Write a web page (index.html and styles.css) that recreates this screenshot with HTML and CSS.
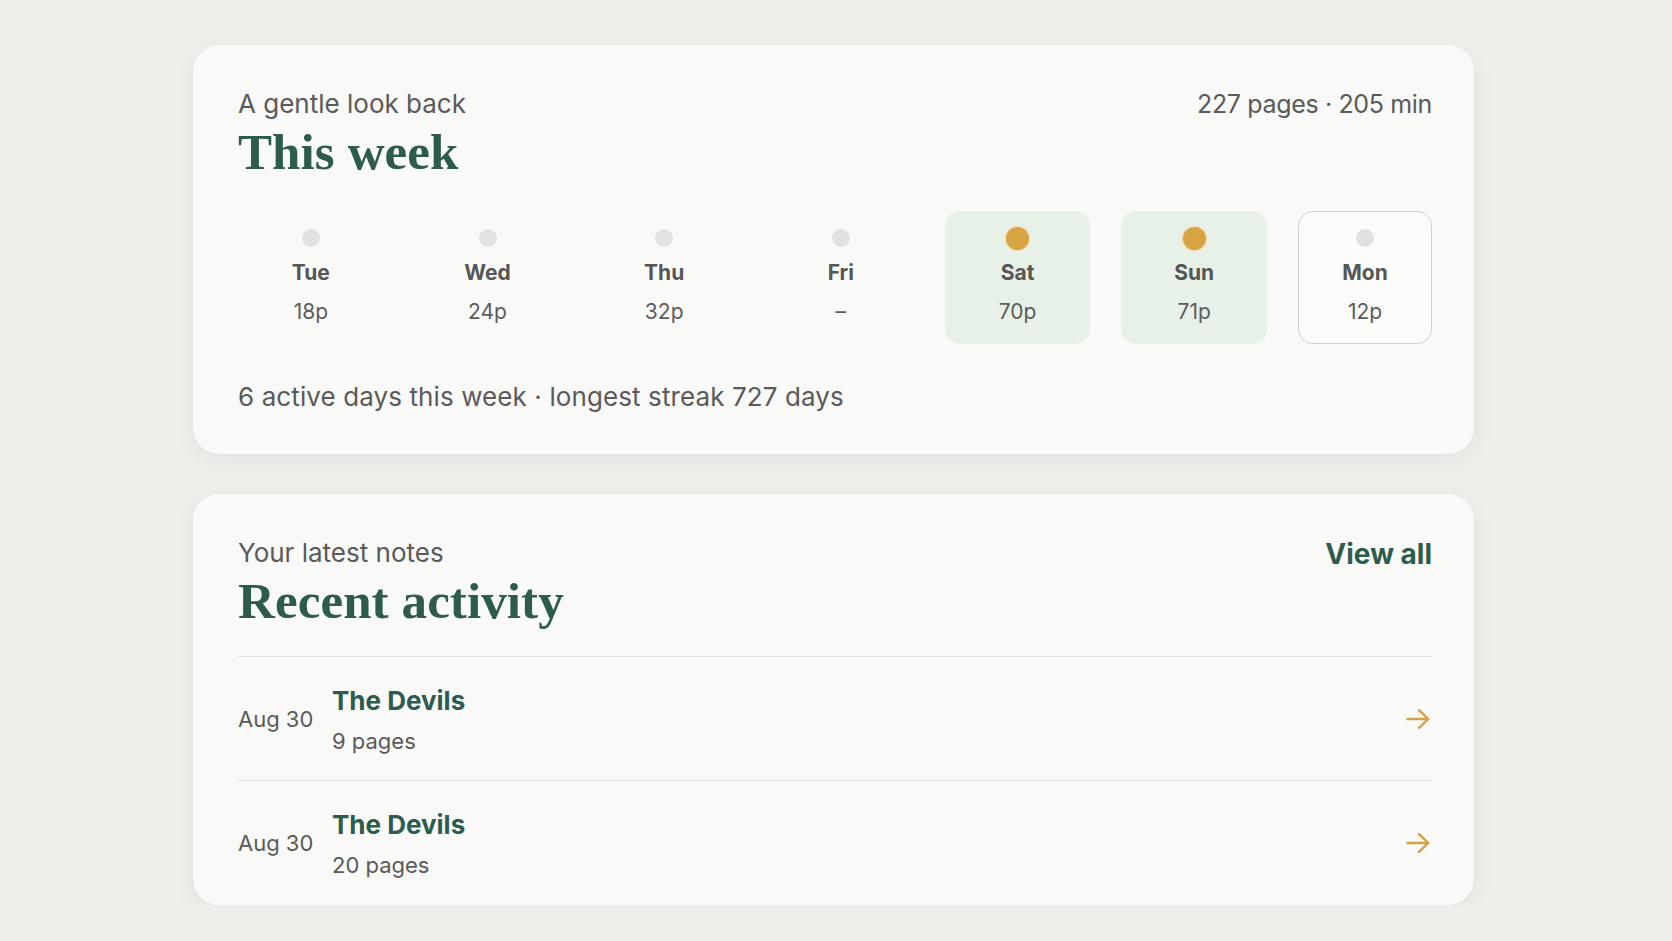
FILE: index.html
```html
<!DOCTYPE html>
<html lang="en">
<head>
<meta charset="utf-8">
<title>Reading overview</title>
<link rel="stylesheet" href="styles.css">
</head>
<body>
<main class="page">
  <section class="card week">
    <header class="card-head">
      <div class="head-text">
        <p class="eyebrow">A gentle look back</p>
        <h2 class="title">This week</h2>
      </div>
      <p class="stat">227 pages · 205 min</p>
    </header>
    <div class="days">
      <div class="day"><span class="dot-wrap"><span class="dot"></span></span><span class="day-name">Tue</span><span class="day-val">18p</span></div>
      <div class="day"><span class="dot-wrap"><span class="dot"></span></span><span class="day-name">Wed</span><span class="day-val">24p</span></div>
      <div class="day"><span class="dot-wrap"><span class="dot"></span></span><span class="day-name">Thu</span><span class="day-val">32p</span></div>
      <div class="day"><span class="dot-wrap"><span class="dot"></span></span><span class="day-name">Fri</span><span class="day-val">–</span></div>
      <div class="day day-hot"><span class="dot-wrap"><span class="dot dot-gold"></span></span><span class="day-name">Sat</span><span class="day-val">70p</span></div>
      <div class="day day-hot"><span class="dot-wrap"><span class="dot dot-gold"></span></span><span class="day-name">Sun</span><span class="day-val">71p</span></div>
      <div class="day day-today"><span class="dot-wrap"><span class="dot"></span></span><span class="day-name">Mon</span><span class="day-val">12p</span></div>
    </div>
    <p class="summary">6 active days this week · longest streak 727 days</p>
  </section>

  <section class="card recent">
    <header class="card-head">
      <div class="head-text">
        <p class="eyebrow">Your latest notes</p>
        <h2 class="title">Recent activity</h2>
      </div>
      <a class="view-all" href="#">View all</a>
    </header>
    <ul class="notes">
      <li class="note">
        <span class="note-date">Aug 30</span>
        <div class="note-body">
          <span class="note-title">The Devils</span>
          <span class="note-meta">9 pages</span>
        </div>
        <svg class="note-arrow" viewBox="0 0 24 20" width="24" height="20" aria-hidden="true"><path d="M1.5 10H22.3M13 1.2L22.3 10L13 18.8" fill="none" stroke="currentColor" stroke-width="2.4" stroke-linecap="round" stroke-linejoin="round"/></svg>
      </li>
      <li class="note">
        <span class="note-date">Aug 30</span>
        <div class="note-body">
          <span class="note-title">The Devils</span>
          <span class="note-meta">20 pages</span>
        </div>
        <svg class="note-arrow" viewBox="0 0 24 20" width="24" height="20" aria-hidden="true"><path d="M1.5 10H22.3M13 1.2L22.3 10L13 18.8" fill="none" stroke="currentColor" stroke-width="2.4" stroke-linecap="round" stroke-linejoin="round"/></svg>
      </li>
    </ul>
  </section>
</main>
</body>
</html>
```

FILE: styles.css
```css
* { box-sizing: border-box; }

html, body {
  margin: 0;
  padding: 0;
}

body {
  background: #efeeea;
  font-family: "Inter", "Noto Sans", "Liberation Sans", sans-serif;
  color: #5a5a59;
}

.page {
  width: 1281px;
  margin: 45px 0 0 193px;
  display: flex;
  flex-direction: column;
  gap: 40px;
}

.card {
  background: #f9f9f8;
  border-radius: 26px;
  box-shadow: 0 6px 26px rgba(40, 40, 30, 0.05), 0 1px 3px rgba(40, 40, 30, 0.03);
  padding: 43px 42px 41px 45px;
}

.card-head {
  display: flex;
  justify-content: space-between;
  align-items: flex-start;
}

.eyebrow {
  margin: 0;
  font-size: 26px;
  line-height: 32px;
  color: #5a5a59;
}

.title {
  margin: 4px 0 0;
  font-family: "Liberation Serif", "Times New Roman", serif;
  font-weight: 700;
  font-size: 51px;
  line-height: 56px;
  color: #2d5c4c;
  letter-spacing: 0.1px;
}

.stat {
  margin: 0;
  font-size: 25px;
  line-height: 32px;
  color: #5a5a59;
  letter-spacing: -0.35px;
}

.days {
  display: flex;
  gap: 31px;
  margin-top: 31px;
}

.day {
  flex: 1 1 0;
  display: flex;
  flex-direction: column;
  align-items: center;
  padding: 14px 0 17px;
  border-radius: 15px;
  border: 1.5px solid transparent;
}

.day-hot {
  background: #e7f1e8;
}

.day-today {
  flex: 0 0 134px;
  border-color: #cfd0cc;
  background: #fbfbfa;
}

.dot-wrap {
  height: 24px;
  display: flex;
  align-items: center;
  justify-content: center;
}

.dot {
  width: 18px;
  height: 18px;
  border-radius: 50%;
  background: #e1e2df;
}

.dot-gold {
  width: 23px;
  height: 23px;
  background: #d8a443;
  box-shadow: 0 0 0 1.5px #f4e3bb;
}

.day-name {
  margin-top: 9px;
  font-size: 21px;
  line-height: 28px;
  font-weight: 700;
  color: #565655;
}

.day-val {
  margin-top: 11px;
  font-size: 21px;
  line-height: 28px;
  color: #5c5c5b;
}

.summary {
  margin: 37px 0 0;
  font-size: 26px;
  line-height: 32px;
  color: #5a5a59;
  letter-spacing: 0.1px;
}

.recent {
  padding-bottom: 1px;
}

.view-all {
  font-size: 28px;
  line-height: 32px;
  font-weight: 700;
  color: #2d5c4c;
  text-decoration: none;
  margin-top: 1px;
}

.notes {
  list-style: none;
  margin: 27px 0 0;
  padding: 0;
  border-top: 1.5px solid #e2e2e0;
}

.note {
  display: flex;
  align-items: center;
  padding: 28px 0 24px;
}

.note + .note {
  border-top: 1.5px solid #e2e2e0;
}

.note-date {
  width: 94px;
  flex: none;
  margin-top: -3px;
  font-size: 22px;
  line-height: 30px;
  color: #5a5a59;
}

.note-body {
  flex: 1;
  display: flex;
  flex-direction: column;
}

.note-title {
  font-size: 26px;
  line-height: 32px;
  font-weight: 700;
  color: #2d5c4c;
}

.note-meta {
  margin-top: 9px;
  font-size: 22px;
  line-height: 30px;
  color: #5a5a59;
}

.note-arrow {
  flex: none;
  color: #d4a144;
  margin-right: 2px;
  margin-top: -3px;
}
```
